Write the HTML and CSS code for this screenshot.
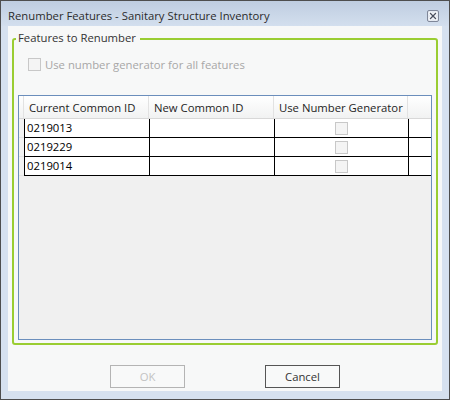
FILE: index.html
```html
<!DOCTYPE html>
<html>
<head>
<meta charset="utf-8">
<link rel="stylesheet" href="styles.css">
</head>
<body>
<div class="window">
  <div class="titlebar">
    <span class="title">Renumber Features - Sanitary Structure Inventory</span>
    <span class="close">
      <svg width="12" height="12" viewBox="0 0 12 12">
        <rect x="0.5" y="0.5" width="11" height="11" rx="1.5" fill="#e4e9f1" stroke="#7f8799"/>
        <path d="M3.5 3.5 L8.5 8.5 M8.5 3.5 L3.5 8.5" stroke="#ffffff" stroke-width="3" stroke-linecap="square"/>
        <path d="M3.5 3.5 L8.5 8.5 M8.5 3.5 L3.5 8.5" stroke="#4a5060" stroke-width="1.3" stroke-linecap="square"/>
      </svg>
    </span>
  </div>
  <div class="client">
    <fieldset class="group">
      <legend class="legend">Features to Renumber</legend>
      <div class="check-row">
        <span class="cb"></span>
        <span class="check-label">Use number generator for all features</span>
      </div>
      <div class="grid">
        <div class="hdr-row">
          <div class="rh-hdr"></div>
          <div class="hc c1">Current Common ID</div>
          <div class="hc c2">New Common ID</div>
          <div class="hc c3">Use Number Generator</div>
          <div class="hc fill"></div>
        </div>
        <div class="row">
          <div class="rh"></div>
          <div class="cell c1 first">0219013</div>
          <div class="cell c2"></div>
          <div class="cell c3"><span class="cb"></span></div>
          <div class="cell fill"></div>
        </div>
        <div class="row">
          <div class="rh"></div>
          <div class="cell c1 first">0219229</div>
          <div class="cell c2"></div>
          <div class="cell c3"><span class="cb"></span></div>
          <div class="cell fill"></div>
        </div>
        <div class="row">
          <div class="rh"></div>
          <div class="cell c1 first">0219014</div>
          <div class="cell c2"></div>
          <div class="cell c3"><span class="cb"></span></div>
          <div class="cell fill"></div>
        </div>
      </div>
    </fieldset>
    <div class="buttons">
      <button class="btn btn-disabled" disabled>OK</button>
      <button class="btn">Cancel</button>
    </div>
  </div>
</div>
</body>
</html>
```

FILE: styles.css
```css
* { box-sizing: border-box; }
html, body {
  margin: 0;
  padding: 0;
  width: 450px;
  height: 400px;
  overflow: hidden;
  background: #ffffff;
}
body {
  font-family: "Open Sans", "Noto Sans", "Liberation Sans", sans-serif;
  font-size: 11.3px;
  color: #333333;
}
.window {
  width: 450px;
  height: 400px;
  border: 1px solid #4e4e4e;
  background: #d6e1ef;
  display: flex;
  flex-direction: column;
  padding: 0 7px 8px 7px;
}
.titlebar {
  height: 25px;
  margin: 0 -7px;
  padding: 0 10px 0 7px;
  background: linear-gradient(#bfcde0, #d3dfee);
  display: flex;
  align-items: center;
  justify-content: space-between;
}
.title {
  font-size: 11.3px;
  color: #2b2b2b;
  line-height: 16px;
  padding-top: 4px;
}
.close {
  display: flex;
  width: 12px;
  height: 12px;
  margin-top: 4px;
}
.client {
  flex: 1;
  background: #f7f8f8;
  padding: 4px 4px 0 4px;
  display: flex;
  flex-direction: column;
}
.group {
  margin: 0;
  padding: 0 4px 3px 4px;
  border: 2px solid #9acd32;
  border-radius: 3px;
  min-width: 0;
}
.legend {
  font-size: 11.3px;
  line-height: 16px;
  color: #333333;
  padding: 0 4px 2px 2px;
  margin-left: -2px;
}
.check-row {
  display: flex;
  align-items: center;
  height: 13px;
  margin: 10px 0 0 10px;
}
.cb {
  display: inline-block;
  width: 13px;
  height: 13px;
  border: 1px solid #c8c8c8;
  background: #f4f4f4;
}
.check-label {
  margin-left: 4px;
  font-size: 11.3px;
  color: #a7a7a7;
  line-height: 16px;
}
.grid {
  margin-top: 24px;
  height: 245px;
  border: 1px solid #6b8ebc;
  background: #f0f0f0;
}
.hdr-row {
  display: flex;
  height: 23px;
  background: linear-gradient(#ffffff, #f1f2f2);
  border-bottom: 1px solid #d8d8d8;
}
.rh-hdr {
  width: 5px;
  border-right: 1px solid #e2e2e2;
}
.hc {
  font-size: 11.3px;
  color: #1e1e1e;
  line-height: 23px;
  padding-left: 5px;
  border-right: 1px solid #e2e2e2;
  white-space: nowrap;
}
.c1 { width: 125px; }
.c2 { width: 125px; }
.c3 { width: 134px; }
.fill { flex: 1; border-right: none; }
.row {
  display: flex;
  height: 19px;
  background: #ffffff;
  border-bottom: 1px solid #000000;
}
.rh {
  width: 5px;
  background: #f3f3f3;
  margin-bottom: -1px;
  border-bottom: 1px solid #e4e4e4;
}
.cell {
  font-size: 11.3px;
  color: #000000;
  line-height: 18px;
  padding-left: 3px;
  border-right: 1px solid #000000;
}
.cell.first {
  border-left: 1px solid #000000;
  width: 126px;
  padding-left: 2px;
}
.cell.c3 {
  display: flex;
  justify-content: center;
  align-items: center;
  padding-left: 0;
}
.cell.fill { border-right: none; }
.buttons {
  display: flex;
  justify-content: center;
  gap: 80px;
  margin-top: 20px;
}
.btn {
  width: 75px;
  height: 23px;
  font-family: "Open Sans", "Noto Sans", "Liberation Sans", sans-serif;
  font-size: 11.3px;
  background: #f8f9f9;
  border: 1px solid #555555;
  color: #333333;
  padding: 0;
  border-radius: 0;
}
.btn-disabled {
  border-color: #b4b4b4;
  color: #c3c3c3;
}
```
